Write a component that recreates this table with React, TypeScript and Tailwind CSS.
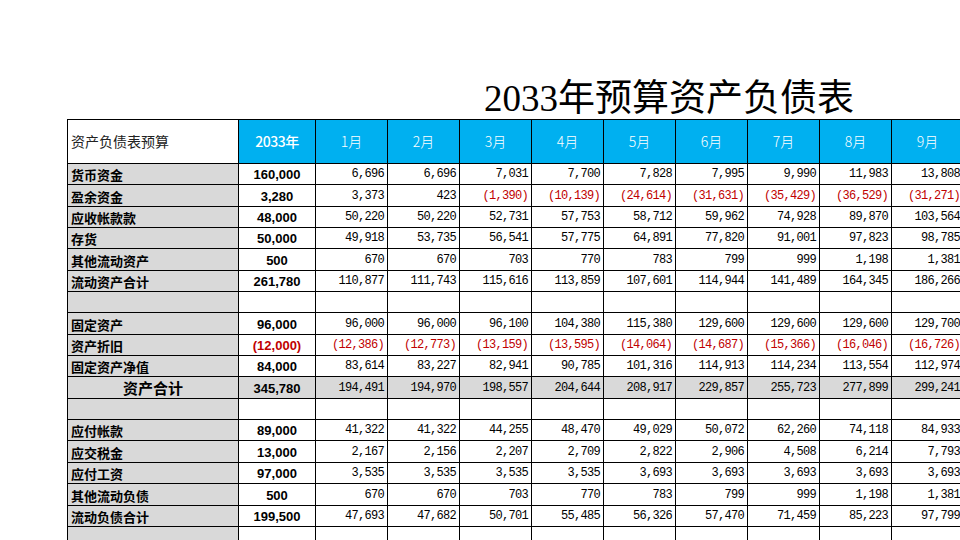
const months = ['1月', '2月', '3月', '4月', '5月', '6月', '7月', '8月', '9月'];

type Row = {
  label?: string;
  year?: string;
  values?: string[];
  total?: boolean;
};

const rows: Row[] = [
  { label: '货币资金', year: '160,000', values: ['6,696', '6,696', '7,031', '7,700', '7,828', '7,995', '9,990', '11,983', '13,808'] },
  { label: '盈余资金', year: '3,280', values: ['3,373', '423', '(1,390)', '(10,139)', '(24,614)', '(31,631)', '(35,429)', '(36,529)', '(31,271)'] },
  { label: '应收帐款款', year: '48,000', values: ['50,220', '50,220', '52,731', '57,753', '58,712', '59,962', '74,928', '89,870', '103,564'] },
  { label: '存货', year: '50,000', values: ['49,918', '53,735', '56,541', '57,775', '64,891', '77,820', '91,001', '97,823', '98,785'] },
  { label: '其他流动资产', year: '500', values: ['670', '670', '703', '770', '783', '799', '999', '1,198', '1,381'] },
  { label: '流动资产合计', year: '261,780', values: ['110,877', '111,743', '115,616', '113,859', '107,601', '114,944', '141,489', '164,345', '186,266'] },
  {},
  { label: '固定资产', year: '96,000', values: ['96,000', '96,000', '96,100', '104,380', '115,380', '129,600', '129,600', '129,600', '129,700'] },
  { label: '资产折旧', year: '(12,000)', values: ['(12,386)', '(12,773)', '(13,159)', '(13,595)', '(14,064)', '(14,687)', '(15,366)', '(16,046)', '(16,726)'] },
  { label: '固定资产净值', year: '84,000', values: ['83,614', '83,227', '82,941', '90,785', '101,316', '114,913', '114,234', '113,554', '112,974'] },
  { label: '资产合计', year: '345,780', values: ['194,491', '194,970', '198,557', '204,644', '208,917', '229,857', '255,723', '277,899', '299,241'], total: true },
  {},
  { label: '应付帐款', year: '89,000', values: ['41,322', '41,322', '44,255', '48,470', '49,029', '50,072', '62,260', '74,118', '84,933'] },
  { label: '应交税金', year: '13,000', values: ['2,167', '2,156', '2,207', '2,709', '2,822', '2,906', '4,508', '6,214', '7,793'] },
  { label: '应付工资', year: '97,000', values: ['3,535', '3,535', '3,535', '3,535', '3,693', '3,693', '3,693', '3,693', '3,693'] },
  { label: '其他流动负债', year: '500', values: ['670', '670', '703', '770', '783', '799', '999', '1,198', '1,381'] },
  { label: '流动负债合计', year: '199,500', values: ['47,693', '47,682', '50,701', '55,485', '56,326', '57,470', '71,459', '85,223', '97,799'] },
  {},
];

const isNeg = (v?: string) => !!v && v.startsWith('(');

export default function App() {
  return (
    <div className="w-[960px] h-[540px] overflow-hidden bg-white font-['Noto_Sans_CJK_SC',sans-serif]">
      {/* Title */}
      <div className="h-[119px] pt-[78px] pl-[484px]">
        <h1 className="text-[37px] leading-[41px] text-black whitespace-nowrap font-['Liberation_Serif','Noto_Sans_CJK_SC',serif]">
          2033年预算资产负债表
        </h1>
      </div>

      {/* Sheet */}
      <table className="ml-[67px] table-fixed border-collapse w-[896px]">
        <colgroup>
          <col className="w-[171px]" />
          <col className="w-[77px]" />
          {months.map((m) => (
            <col key={m} className="w-[72px]" />
          ))}
        </colgroup>
        <thead>
          <tr className="h-[44px]">
            <th className="border border-black bg-white text-left pl-[3px] text-[14px] font-normal text-[#222]">
              资产负债表预算
            </th>
            <th className="border border-black bg-[#00b0f0] text-white text-[14px] font-medium tracking-[-0.5px]">
              2033年
            </th>
            {months.map((m) => (
              <th key={m} className="border border-black bg-[#00b0f0] text-white text-[14px] font-light">
                {m}
              </th>
            ))}
          </tr>
        </thead>
        <tbody>
          {rows.map((r, i) => (
            <tr key={i} className={`h-[21.35px] ${r.total ? 'bg-[#d9d9d9]' : ''}`}>
              <td
                className={`border border-black bg-[#d9d9d9] align-bottom p-0 whitespace-nowrap text-black ${
                  r.total ? 'text-center text-[15px] font-bold leading-[20px]' : 'pl-[3px] text-[13px] font-bold leading-[19px]'
                }`}
              >
                {r.label}
              </td>
              <td
                className={`border border-black align-bottom p-0 text-center text-[13px] font-bold leading-[19px] font-['Liberation_Sans',sans-serif] ${
                  isNeg(r.year) ? 'text-[#c00000]' : 'text-black'
                }`}
              >
                {r.year}
              </td>
              {months.map((m, j) => {
                const v = r.values?.[j];
                return (
                  <td
                    key={m}
                    className={`border border-black align-bottom p-0 pr-[3px] text-right text-[12px] tracking-[-0.7px] leading-[19px] whitespace-nowrap font-['Liberation_Mono',monospace] ${
                      isNeg(v) ? 'text-[#c00000]' : 'text-black'
                    }`}
                  >
                    {v}
                  </td>
                );
              })}
            </tr>
          ))}
        </tbody>
      </table>
    </div>
  );
}
